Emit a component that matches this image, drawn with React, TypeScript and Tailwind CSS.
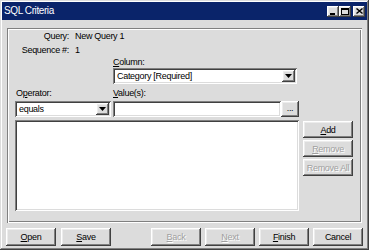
import React from "react";

const raised =
  "shadow-[inset_-1px_-1px_#404040,inset_1px_1px_#ffffff,inset_-2px_-2px_#808080,inset_2px_2px_#ececec]";
const sunken =
  "shadow-[inset_1px_1px_#808080,inset_-1px_-1px_#ffffff,inset_2px_2px_#404040,inset_-2px_-2px_#dcdcdc]";
const etched =
  "shadow-[inset_1px_1px_#808080,inset_-1px_-1px_#ffffff,inset_2px_2px_#ffffff,inset_-2px_-2px_#808080]";
const disabled = "text-[#a0a0a0] [text-shadow:1px_1px_0_#ffffff]";

function Arrow() {
  return (
    <svg width="7" height="4" viewBox="0 0 7 4">
      <path d="M0 0h7L3.5 4z" fill="#000" />
    </svg>
  );
}

function Combo({ w, text }: { w: string; text: string }) {
  return (
    <div className={`${w} h-[16px] bg-white ${sunken} flex items-center p-[2px]`}>
      <div className="flex-1 pl-[2px] leading-[12px] truncate">{text}</div>
      <div className={`w-[13px] h-[12px] bg-[#dcdcdc] ${raised} flex items-center justify-center`}>
        <Arrow />
      </div>
    </div>
  );
}

function Btn({
  children,
  dis,
  w = "w-[50px]",
  h = "h-[18px]",
}: {
  children: React.ReactNode;
  dis?: boolean;
  w?: string;
  h?: string;
}) {
  return (
    <div
      className={`${w} ${h} ${raised} bg-[#dcdcdc] flex items-center justify-center leading-[12px] whitespace-nowrap ${
        dis ? disabled : "text-black"
      }`}
    >
      {children}
    </div>
  );
}

export default function App() {
  return (
    <div className="w-[369px] h-[250px] bg-[#dcdcdc] p-[2px] shadow-[inset_-1px_-1px_#404040,inset_1px_1px_#dcdcdc,inset_-2px_-2px_#808080,inset_2px_2px_#ffffff] flex flex-col text-[9px] tracking-[-0.3px] leading-[12px] text-black font-['Liberation_Sans',Arial,sans-serif]">
      {/* Title bar */}
      <div className="h-[18px] bg-[#0a246a] flex items-center pl-[2px] pr-[2px]">
        <span className="text-white text-[10px] tracking-[-0.4px] leading-[14px]">SQL Criteria</span>
        <div className="flex-1" />
        <div className="flex items-center">
          <div className={`w-[12px] h-[11px] bg-[#dcdcdc] ${raised} flex items-end justify-start pl-[3px] pb-[2px]`}>
            <div className="w-[5px] h-[2px] bg-black" />
          </div>
          <div className={`w-[12px] h-[11px] bg-[#dcdcdc] ${raised} flex items-center justify-center`}>
            <div className="w-[8px] h-[7px] border border-black border-t-2" />
          </div>
          <div className={`ml-[2px] w-[12px] h-[11px] bg-[#dcdcdc] ${raised} flex items-center justify-center`}>
            <svg width="7" height="6" viewBox="0 0 7 6">
              <path d="M0.5 0.5L6.5 5.5M6.5 0.5L0.5 5.5" stroke="#000" strokeWidth="1.4" />
            </svg>
          </div>
        </div>
      </div>

      {/* Body */}
      <div className="flex-1 flex flex-col pl-[5px]">
        <div className={`mt-[8px] w-[355px] h-[195px] ${etched} flex flex-col`}>
          <div className="mt-[2px] h-[12px] flex">
            <div className="w-[62px] text-right">Query:</div>
            <div className="ml-[6px]">New Query 1</div>
          </div>
          <div className="mt-[2px] h-[12px] flex">
            <div className="w-[62px] text-right">Sequence #:</div>
            <div className="ml-[6px]">1</div>
          </div>
          <div className="h-[12px] pl-[106px]">
            <span className="underline">C</span>olumn:
          </div>
          <div className="pl-[106px]">
            <Combo w="w-[184px]" text="Category [Required]" />
          </div>
          <div className="mt-[3px] h-[12px] flex pl-[9px]">
            <div className="w-[97px]">
              O<span className="underline">p</span>erator:
            </div>
            <div>
              <span className="underline">V</span>alue(s):
            </div>
          </div>
          <div className="mt-[2px] flex pl-[8px]">
            <Combo w="w-[96px]" text="equals" />
            <div className={`ml-[2px] w-[168px] h-[16px] bg-white ${sunken}`} />
            <Btn w="w-[18px]" h="h-[16px]">
              <span className="pb-[3px]">...</span>
            </Btn>
          </div>
          <div className="mt-[3px] flex pl-[8px]">
            <div className={`w-[284px] h-[91px] bg-white ${sunken}`} />
            <div className="ml-[4px] mt-[1px] flex flex-col gap-[2px]">
              <Btn h="h-[17px]">
                <span>
                  <span className="underline">A</span>dd
                </span>
              </Btn>
              <Btn h="h-[17px]" dis>
                <span>
                  <span className="underline">R</span>emove
                </span>
              </Btn>
              <Btn h="h-[17px]" dis>
                <span>Remove All</span>
              </Btn>
            </div>
          </div>
        </div>

        {/* Bottom buttons */}
        <div className="mt-[5px] flex">
          <div className="flex gap-[5px] -ml-[1px]">
            <Btn>
              <span>
                <span className="underline">O</span>pen
              </span>
            </Btn>
            <Btn>
              <span>
                <span className="underline">S</span>ave
              </span>
            </Btn>
          </div>
          <div className="flex-1" />
          <div className="flex gap-[4px] pr-[4px]">
            <Btn dis>
              <span>
                <span className="underline">B</span>ack
              </span>
            </Btn>
            <Btn dis>
              <span>
                <span className="underline">N</span>ext
              </span>
            </Btn>
            <Btn>
              <span>
                <span className="underline">F</span>inish
              </span>
            </Btn>
            <Btn>
              <span>Cancel</span>
            </Btn>
          </div>
        </div>
      </div>
    </div>
  );
}
